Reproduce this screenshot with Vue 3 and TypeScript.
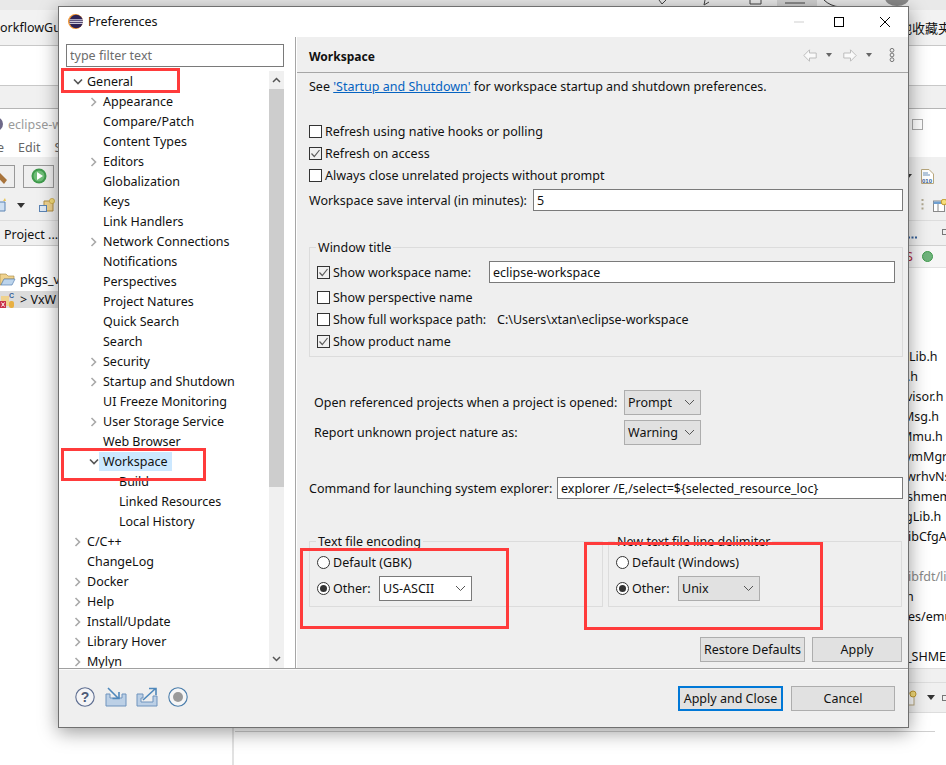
<script setup lang="ts">
interface TreeItem { label: string; level: number; arrow?: 'open' | 'closed'; selected?: boolean }
const tree: TreeItem[] = [
  { label: 'General', level: 0, arrow: 'open' },
  { label: 'Appearance', level: 1, arrow: 'closed' },
  { label: 'Compare/Patch', level: 1 },
  { label: 'Content Types', level: 1 },
  { label: 'Editors', level: 1, arrow: 'closed' },
  { label: 'Globalization', level: 1 },
  { label: 'Keys', level: 1 },
  { label: 'Link Handlers', level: 1 },
  { label: 'Network Connections', level: 1, arrow: 'closed' },
  { label: 'Notifications', level: 1 },
  { label: 'Perspectives', level: 1 },
  { label: 'Project Natures', level: 1 },
  { label: 'Quick Search', level: 1 },
  { label: 'Search', level: 1 },
  { label: 'Security', level: 1, arrow: 'closed' },
  { label: 'Startup and Shutdown', level: 1, arrow: 'closed' },
  { label: 'UI Freeze Monitoring', level: 1 },
  { label: 'User Storage Service', level: 1, arrow: 'closed' },
  { label: 'Web Browser', level: 1 },
  { label: 'Workspace', level: 1, arrow: 'open', selected: true },
  { label: 'Build', level: 2 },
  { label: 'Linked Resources', level: 2 },
  { label: 'Local History', level: 2 },
  { label: 'C/C++', level: 0, arrow: 'closed' },
  { label: 'ChangeLog', level: 0 },
  { label: 'Docker', level: 0, arrow: 'closed' },
  { label: 'Help', level: 0, arrow: 'closed' },
  { label: 'Install/Update', level: 0, arrow: 'closed' },
  { label: 'Library Hover', level: 0, arrow: 'closed' },
  { label: 'Mylyn', level: 0, arrow: 'closed' },
]
const refreshOptions = [
  { label: 'Refresh using native hooks or polling', on: false },
  { label: 'Refresh on access', on: true },
  { label: 'Always close unrelated projects without prompt', on: false },
]
const sideFiles = [
  { t: 'Lib.h', x: 9 }, { t: '.h', x: 7 }, { t: 'visor.h', x: 6 }, { t: 'Msg.h', x: 3 }, { t: 'Mmu.h', x: 1 },
  { t: 'vmMgr', x: 5 }, { t: 'wrhvNs', x: 6 }, { t: 'shmem', x: 7 }, { t: 'gLib.h', x: 5 }, { t: 'ibCfgA', x: 8 },
  { t: '', x: 0 }, { t: 'ibfdt/li', x: 8 }, { t: 'h', x: 6 }, { t: 'es/emu', x: 8 }, { t: '', x: 0 }, { t: '_SHME', x: 6 },
]
</script>

<template>
  <div class="desktop">
    <!-- browser window behind -->
    <div class="browser">
      <svg class="browser-top" width="946" height="10" viewBox="0 0 946 10">
        <rect width="946" height="10" fill="#e9e9e9"/>
        <rect x="777" width="40" height="10" fill="#d2d2d2"/>
        <path d="M659 0 L662 4 L666 0 M705 0 L704 5 L709 2 M750 0 V4 H761 V0 M771 0 M785 3 H805" fill="none" stroke="#444"/>
        <path d="M824 0 Q830 6 840 7" fill="none" stroke="#333"/>
        <ellipse cx="897" cy="-2" rx="12" ry="8" fill="#8a8a8a"/>
      </svg>
      <div class="browser-tabs">
        <span>orkflowGuid</span>
        <span class="cjk">地收藏夹</span>
      </div>
      <div class="browser-blank"></div>
      <div class="browser-bar"></div>
    </div>

    <!-- eclipse window behind -->
    <div class="eclipse">
      <div class="ec-title">
        <svg width="3" height="14" viewBox="0 0 3 14"><circle cx="-4" cy="7" r="7" fill="#6d6888"/></svg>
        <span class="ec-name">eclipse-w</span>
        <span class="spacer"></span>
        <span class="ec-restore"></span>
      </div>
      <div class="ec-menu"><span>e</span><span>Edit</span><span>S</span></div>
      <div class="ec-tool ec-tool1">
        <div class="ec-tool-left">
          <span class="ec-btn"><svg width="14" height="20" viewBox="0 0 14 20"><path d="M0 6 L3 3 L14 14 L11 18 Z" fill="#a8743c"/></svg></span>
          <span class="ec-btn"><svg width="16" height="16" viewBox="0 0 16 16"><circle cx="8" cy="8" r="7.5" fill="#3f9a4c"/><circle cx="8" cy="8" r="5.5" fill="#6fbe78"/><path d="M6 4 L12 8 L6 12 Z" fill="#fff"/></svg></span>
        </div>
        <div class="ec-tool-right">
          <span class="tri"></span>
          <svg width="13" height="15" viewBox="0 0 13 15"><path d="M0.5 0.5 H8 L12.5 5 V14.5 H0.5 Z" fill="#fff" stroke="#b7a67c"/><path d="M2 4 H7 M2 6 H9" stroke="#6f93bd"/><text x="1" y="13.5" font-size="6" font-weight="700" fill="#35609a" font-family="Liberation Sans">010</text></svg>
        </div>
      </div>
      <div class="ec-tool ec-tool2">
        <div class="ec-tool-left">
          <svg class="cut" width="14" height="14" viewBox="0 0 14 14"><path d="M1 4 H10 V13 H1 Z" fill="#cfe0f2" stroke="#5a83b3"/><path d="M8 3 L10 0 L11 3 Z" fill="#e8c65a"/></svg>
          <span class="tri"></span>
          <svg class="folder" width="16" height="14" viewBox="0 0 16 14"><path d="M5 3 H14 V13 H5 Z" fill="#efd28e" stroke="#b18f45"/><circle cx="13" cy="3" r="2.6" fill="#f5dd7a" stroke="#c19a30" stroke-width=".6"/><rect x="0.5" y="7.5" width="7" height="6" fill="#dfe9f5" stroke="#5a83b3"/></svg>
          <span class="tri"></span>
        </div>
        <div class="ec-tool-right">
          <svg width="3" height="14" viewBox="0 0 3 14"><path d="M1.5 1 V13" stroke="#b0a890" stroke-width="2" stroke-dasharray="2 2.2"/></svg>
          <svg width="18" height="13" viewBox="0 0 18 13"><rect x="0.5" y="2" width="11" height="10.5" fill="#fff" stroke="#8a8a8a"/><path d="M0.5 2.5 H11 V5 H0.5 Z" fill="#6f9fd0"/><path d="M5 5 V12" stroke="#8a8a8a"/><circle cx="11" cy="3" r="2.8" fill="#f5dd7a" stroke="#c19a30"/></svg>
        </div>
      </div>
      <div class="ec-tabs">
        <span>Project ...</span>
        <div class="ec-tabs-right">
          <svg width="9" height="3" viewBox="0 0 9 3"><path d="M0 1.5 H9" stroke="#35609a" stroke-width="2" stroke-dasharray="2 1.5"/></svg>
          <span class="mini-box"></span>
        </div>
      </div>
      <div class="ec-content">
        <div class="ec-tree">
          <div class="ec-row"><svg width="16" height="14" viewBox="0 0 16 14"><path d="M0 2 H6 L8 4 H14 V7 H4 L1 13 H0 Z" fill="#efd28e" stroke="#a3833c" stroke-width=".6"/><path d="M4 7 H15 L12 13 H1 Z" fill="#bcd4ec" stroke="#5a83b3" stroke-width=".7"/></svg><span class="pkgs">pkgs_v</span></div>
          <div class="ec-row ec-row-sel"><svg width="16" height="16" viewBox="0 0 16 16"><path d="M1 4 H9 V14 H1 Z" fill="#efd28e"/><text x="9" y="6" font-size="7" font-weight="700" fill="#35609a" font-family="Liberation Sans">C</text><rect x="0" y="9" width="6" height="7" fill="#c8324a"/><path d="M1.5 10.5 L4.5 14.5 M4.5 10.5 L1.5 14.5" stroke="#fff"/><rect x="9" y="9" width="5" height="7" rx="2" fill="#e8b043"/></svg><span class="vx">&gt; VxW</span></div>
        </div>
        <div class="ec-files">
          <div class="ec-band">
            <span class="s-red">S</span>
            <span class="dot"></span>
          </div>
          <div class="ec-list">
            <div v-for="(f, i) in sideFiles" :key="i" class="ec-file" :class="{ dim: f.t === 'ibfdt/li' }" :style="{ marginLeft: f.x + 'px' }">{{ f.t }}</div>
          </div>
        </div>
      </div>
      <div class="ec-band2"></div>
      <div class="ec-foot">
        <svg width="12" height="16" viewBox="0 0 12 16"><rect x="0" y="3" width="6" height="12" fill="#fff" stroke="#b7a67c"/><circle cx="5" cy="4" r="3" fill="#f5dd7a" stroke="#c19a30"/></svg>
        <span class="tri"></span>
        <span class="mini-box"></span>
      </div>
    </div>
    <div class="under-v"></div>
    <div class="under-h"></div>

    <!-- preferences dialog -->
    <div class="dialog">
      <div class="titlebar">
        <svg class="logo" width="15" height="15" viewBox="0 0 15 15">
          <circle cx="7.5" cy="7.5" r="7.5" fill="#f0922e"/>
          <circle cx="8.2" cy="7.5" r="6.8" fill="#2c2255"/>
          <path d="M1.5 5.8 H15 M1.5 7.6 H15 M1.5 9.4 H15" stroke="#f3f1f8" stroke-width="0.9"/>
        </svg>
        <span class="title">Preferences</span>
        <span class="spacer"></span>
        <svg class="wbtn wmin" width="10" height="10" viewBox="0 0 10 10"><path d="M0 5 H10" stroke="#cfcfcf"/></svg>
        <svg class="wbtn wmax" width="10" height="10" viewBox="0 0 10 10"><rect x="0.5" y="0.5" width="9" height="9" fill="none" stroke="#000"/></svg>
        <svg class="wbtn wclose" width="10" height="10" viewBox="0 0 10 10"><path d="M0 0 L10 10 M10 0 L0 10" stroke="#000"/></svg>
      </div>

      <div class="body">
        <div class="left">
          <input class="filter" placeholder="type filter text" />
          <div class="tree-wrap">
            <div class="tree">
              <div v-for="item in tree" :key="item.label" class="node" :class="'lv' + item.level">
                <span class="arrow">
                  <svg v-if="item.arrow === 'open'" width="10" height="8" viewBox="0 0 10 8"><path d="M1 1.5 L5 5.5 L9 1.5" fill="none" stroke="#555" stroke-width="1.6"/></svg>
                  <svg v-else-if="item.arrow === 'closed'" width="8" height="10" viewBox="0 0 8 10"><path d="M1.5 1 L5.5 5 L1.5 9" fill="none" stroke="#a9a9a9" stroke-width="1.6"/></svg>
                </span>
                <span class="node-label" :class="{ sel: item.selected }">{{ item.label }}</span>
              </div>
            </div>
            <div class="scroll">
              <div class="sc-btn"><svg width="9" height="6" viewBox="0 0 9 6"><path d="M1 5 L4.5 1.5 L8 5" fill="none" stroke="#555" stroke-width="1.5"/></svg></div>
              <div class="sc-thumb"></div>
              <div class="sc-rest"></div>
              <div class="sc-btn"><svg width="9" height="6" viewBox="0 0 9 6"><path d="M1 1 L4.5 4.5 L8 1" fill="none" stroke="#555" stroke-width="1.5"/></svg></div>
            </div>
          </div>
        </div>

        <div class="right">
          <div class="head">
            <span class="head-title">Workspace</span>
            <span class="spacer"></span>
            <svg class="nav-ico" width="14" height="13" viewBox="0 0 14 13"><path d="M6.5 0.8 L0.8 6.5 L6.5 12.2 V9 H13.2 V4 H6.5 Z" fill="#fafafa" stroke="#bdbdbd"/></svg>
            <span class="nav-tri first"></span>
            <svg class="nav-ico nav-fwd" width="14" height="13" viewBox="0 0 14 13"><path d="M7.5 0.8 L13.2 6.5 L7.5 12.2 V9 H0.8 V4 H7.5 Z" fill="#fafafa" stroke="#bdbdbd"/></svg>
            <span class="nav-tri"></span>
            <svg class="nav-ico nav-menu" width="6" height="14" viewBox="0 0 6 14"><g fill="none" stroke="#777"><circle cx="3" cy="2.3" r="1.9"/><circle cx="3" cy="7" r="1.9"/><circle cx="3" cy="11.7" r="1.9"/></g></svg>
          </div>

          <div class="content">
            <div class="see">See <a class="link">'Startup and Shutdown'</a> for workspace startup and shutdown preferences.</div>

            <div class="checks">
              <label v-for="o in refreshOptions" :key="o.label" class="check-row">
                <span class="check" :class="{ on: o.on }">
                  <svg v-if="o.on" width="11" height="11" viewBox="0 0 11 11"><path d="M1.5 5.5 L4.3 8.5 L9.5 2" fill="none" stroke="#5d5d5d" stroke-width="1.2"/></svg>
                </span>
                {{ o.label }}
              </label>
            </div>

            <div class="save-row">
              <span class="save-label">Workspace save interval (in minutes):</span>
              <input class="field grow" value="5" readonly />
            </div>

            <fieldset class="group win-group">
              <legend>Window title</legend>
              <div class="check-row name-row">
                <span class="check on"><svg width="11" height="11" viewBox="0 0 11 11"><path d="M1.5 5.5 L4.3 8.5 L9.5 2" fill="none" stroke="#5d5d5d" stroke-width="1.2"/></svg></span>
                <span class="name-label">Show workspace name:</span>
                <input class="field grow" value="eclipse-workspace" readonly />
              </div>
              <div class="check-row"><span class="check"></span>Show perspective name</div>
              <div class="check-row"><span class="check"></span><span class="full-label">Show full workspace path:</span><span>C:\Users\xtan\eclipse-workspace</span></div>
              <div class="check-row"><span class="check on"><svg width="11" height="11" viewBox="0 0 11 11"><path d="M1.5 5.5 L4.3 8.5 L9.5 2" fill="none" stroke="#5d5d5d" stroke-width="1.2"/></svg></span>Show product name</div>
            </fieldset>

            <div class="combo-grid">
              <span>Open referenced projects when a project is opened:</span>
              <div class="select gray">Prompt<svg width="11" height="7" viewBox="0 0 11 7"><path d="M1 1 L5.5 5.5 L10 1" fill="none" stroke="#555"/></svg></div>
              <span>Report unknown project nature as:</span>
              <div class="select gray">Warning<svg width="11" height="7" viewBox="0 0 11 7"><path d="M1 1 L5.5 5.5 L10 1" fill="none" stroke="#555"/></svg></div>
            </div>

            <div class="cmd-row">
              <span class="cmd-label">Command for launching system explorer:</span>
              <input class="field grow" value="explorer /E,/select=${selected_resource_loc}" readonly />
            </div>

            <div class="enc-row">
              <fieldset class="group enc">
                <legend>Text file encoding</legend>
                <div class="radio-row"><span class="radio"></span>Default (GBK)</div>
                <div class="radio-row other"><span class="radio on"></span><span class="other-label">Other:</span>
                  <div class="select white enc-sel">US-ASCII<svg width="11" height="7" viewBox="0 0 11 7"><path d="M1 1 L5.5 5.5 L10 1" fill="none" stroke="#555"/></svg></div>
                </div>
              </fieldset>
              <fieldset class="group enc">
                <legend>New text file line delimiter</legend>
                <div class="radio-row"><span class="radio"></span>Default (Windows)</div>
                <div class="radio-row other"><span class="radio on"></span><span class="other-label">Other:</span>
                  <div class="select gray delim-sel">Unix<svg width="11" height="7" viewBox="0 0 11 7"><path d="M1 1 L5.5 5.5 L10 1" fill="none" stroke="#555"/></svg></div>
                </div>
              </fieldset>
            </div>

            <div class="btn-row">
              <button class="btn restore">Restore Defaults</button>
              <button class="btn apply">Apply</button>
            </div>
          </div>
        </div>
      </div>

      <div class="footer">
        <svg width="20" height="20" viewBox="0 0 20 20"><circle cx="10" cy="10" r="9.2" fill="#f4f4f6" stroke="#5f6f92" stroke-width="1.1"/><text x="10" y="15" text-anchor="middle" font-size="14" font-weight="700" fill="#4f5b78" font-family="Liberation Sans">?</text></svg>
        <svg class="f2" width="22" height="20" viewBox="0 0 22 20"><path d="M1 7 H5 V11 H17 V7 H21 V19 H1 Z" fill="#bcd0e6" stroke="#6f93bd"/><path d="M3 1 L13 11 M14 5 V11.5 H7.5" fill="none" stroke="#4f88bb" stroke-width="1.6"/></svg>
        <svg class="f3" width="22" height="20" viewBox="0 0 22 20"><path d="M1 7 H7 V11 H5 V15 H17 V9 H21 V19 H1 Z" fill="#bcd0e6" stroke="#6f93bd"/><path d="M7 13 L19 2 M13 1.5 H20 V8" fill="none" stroke="#4f88bb" stroke-width="1.6"/></svg>
        <svg class="f4" width="20" height="20" viewBox="0 0 20 20"><circle cx="10" cy="10" r="9.2" fill="#f6f6f6" stroke="#4a7dab" stroke-width="1.1"/><circle cx="10" cy="10" r="5" fill="#9a9a9a"/></svg>
        <span class="spacer"></span>
        <button class="btn primary">Apply and Close</button>
        <button class="btn cancel">Cancel</button>
      </div>
    </div>

    <!-- red annotation rectangles drawn over the screenshot -->
    <div class="mark m1"></div>
    <div class="mark m2"></div>
    <div class="mark m3"></div>
    <div class="mark m4"></div>
  </div>
</template>

<style>
html, body { margin: 0; background: #fff; }
</style>

<style scoped>
.desktop {
  position: relative;
  width: 946px;
  height: 765px;
  overflow: hidden;
  background: #fff;
  font-family: "Noto Sans", "Noto Sans CJK SC", sans-serif;
  font-size: 12.5px;
  color: #111;
}
.spacer { flex: 1; }

/* background windows */
.browser { position: absolute; left: 0; top: 0; width: 946px; }
.browser-top { display: block; }
.browser-tabs {
  height: 36px; box-sizing: border-box; background: #f2f2f2; border-bottom: 1px solid #c8c8c8;
  display: flex; justify-content: space-between; align-items: center; padding-bottom: 1px; overflow: hidden; white-space: nowrap;
}
.cjk { margin-right: -5px; font-size: 13px; }
.browser-blank { height: 39px; background: #fff; }
.browser-bar { height: 23px; background: #f0f0f0; border-top: 1px solid #c8c8c8; }

.eclipse {
  position: absolute; left: 0; top: 108px; width: 946px; height: 606px;
  border-top: 1px solid #b5b5b5; background: #fff; box-sizing: border-box; overflow: hidden;
}
.ec-title { height: 30px; display: flex; align-items: center; padding: 0 23px 0 0; }
.ec-name { color: #9a9a9a; margin-left: 5px; white-space: nowrap; }
.ec-restore { width: 9px; height: 9px; border: 1px solid #aaa; }
.ec-menu { height: 18px; display: flex; gap: 14px; color: #666; margin-left: -3px; line-height: 18px; }
.ec-tool { background: #f0f0f0; display: flex; justify-content: space-between; align-items: center; }
.ec-tool1 { height: 38px; padding-right: 12px; }
.ec-tool2 { height: 26px; box-sizing: border-box; padding: 0 0 5px 0; margin-right: 0; border-bottom: 1px solid #ddd; }
.ec-tool-left { display: flex; align-items: center; gap: 8px; }
.ec-tool-right { display: flex; align-items: center; gap: 9px; margin-right: -5px; }
.ec-tool1 .ec-tool-right { margin-right: 0; }
.ec-btn { width: 31px; height: 23px; box-sizing: border-box; border: 1px solid #999; background: #efefef; display: flex; align-items: center; justify-content: center; margin-left: -16px; }
.ec-btn + .ec-btn { margin-left: 0; }
.cut { margin-left: -5px; }
.folder { margin-left: 6px; }
.tri { width: 0; height: 0; border: 4px solid transparent; border-top: 5px solid #333; border-bottom: 0; }
.ec-tabs {
  height: 25px; box-sizing: border-box; background: #f0f0f0; border-bottom: 1px solid #d0d0d0; padding: 0 0 0 4px; line-height: 28px;
  display: flex; justify-content: space-between; white-space: nowrap;
}
.ec-tabs-right { width: 38px; display: flex; justify-content: space-between; align-items: flex-start; padding-top: 8px; }
.ec-tabs-right svg { margin-top: 7px; }
.mini-box { width: 8px; height: 4px; border: 1px solid #777; margin-right: -6px; flex: none; }
.ec-content { display: flex; justify-content: space-between; height: 422px; }
.ec-tree { padding-top: 23px; }
.ec-row { height: 20px; display: flex; align-items: center; white-space: nowrap; }
.pkgs { margin-left: 4px; }
.vx { margin-left: 4px; }
.ec-row-sel { height: 17px; margin-top: 2px; background: #dcdcdc; }
.ec-files { width: 46px; overflow: hidden; }
.ec-band { height: 22px; background: #f6f6f6; border-bottom: 1px solid #e2e2e2; box-sizing: border-box; display: flex; align-items: center; padding-left: 6px; }
.s-red { color: #b0283c; width: 15px; }
.dot { width: 9px; height: 9px; border-radius: 50%; background: #6fb37c; border: 1px solid #3f9a4c; margin-left: 1px; }
.ec-list { padding-top: 79px; }
.ec-file { height: 20px; line-height: 20px; white-space: nowrap; }
.ec-file.dim { color: #888; }
.ec-band2 { height: 15px; width: 38px; margin-left: auto; box-sizing: border-box; background: #f0f0f0; border-top: 1px solid #ddd; border-bottom: 1px solid #ddd; }
.ec-foot { height: 30px; width: 38px; margin-left: auto; box-sizing: border-box; background: #f0f0f0; border-bottom: 1px solid #ddd; display: flex; justify-content: space-between; align-items: center; }
.under-v { position: absolute; left: 232px; top: 727px; width: 2px; height: 38px; background: #e2e2e2; }
.under-h { position: absolute; left: 235px; top: 731px; width: 700px; height: 1px; background: #cfcfcf; }

/* dialog */
.dialog {
  position: absolute; left: 58px; top: 6px; width: 851px; height: 722px; box-sizing: border-box;
  border: 1px solid #707070; background: #efefef;
  box-shadow: 0 4px 18px rgba(0, 0, 0, 0.4);
  display: flex; flex-direction: column;
}
.titlebar { height: 30px; box-sizing: border-box; background: #fff; display: flex; align-items: center; padding: 0 0 1px 9px; flex: none; }
.title { margin-left: 5px; color: #111; padding-bottom: 1px; }
.wbtn { flex: none; }
.wmax { margin-left: 30px; }
.wclose { margin-left: 36px; margin-right: 18px; }

.body { height: 631px; display: flex; flex: none; border-bottom: 1px solid #a0a0a0; box-sizing: content-box; }
.left { width: 236px; background: #fff; border-right: 1px solid #a6a6a6; flex: none; }
.filter {
  display: block; box-sizing: border-box; width: 218px; height: 23px; margin: 7px 0 0 7px;
  border: 1px solid #7a7a7a; padding: 0 3px; font: inherit; outline: none; color: #111; background: #fff;
}
.filter::placeholder { color: #6d6d6d; opacity: 1; }
.tree-wrap { margin-top: 4px; height: 597px; display: flex; overflow: hidden; }
.tree { width: 210px; flex: none; height: 597px; overflow: hidden; }
.node { height: 20px; display: flex; align-items: center; white-space: nowrap; padding-top: 1px; box-sizing: border-box; }
.arrow { width: 17px; height: 20px; flex: none; display: flex; align-items: center; justify-content: center; padding-right: 1px; box-sizing: border-box; }
.lv0 { padding-left: 11px; }
.lv1 { padding-left: 27px; }
.lv2 { padding-left: 43px; }
.node-label { line-height: 19px; padding: 0 3px 0 0; }
.node-label.sel { background: #cce8ff; padding: 0 4px; margin-left: -4px; }
.scroll { width: 15px; background: #f0f0f0; display: flex; flex-direction: column; flex: none; }
.sc-btn { height: 18px; display: flex; align-items: center; justify-content: center; flex: none; }
.sc-thumb { height: 398px; background: #cdcdcd; flex: none; }
.sc-rest { flex: 1; }

.right { flex: 1; border-left: 1px solid #fff; min-width: 0; }
.head { height: 36px; box-sizing: border-box; border-bottom: 1px solid #a6a6a6; display: flex; align-items: center; padding: 0 13px 0 12px; }
.head-title { font-weight: 700; font-size: 12px; padding-top: 3px; }
.nav-ico { margin-top: 1px; }
.nav-tri { width: 0; height: 0; border: 3.5px solid transparent; border-top: 4px solid #666; border-bottom: 0; margin-left: 9px; margin-top: 1px; }
.nav-fwd { margin-left: 11px; }
.nav-menu { margin-left: 17px; }

.content { padding: 0 5px 0 12px; }
.see { height: 28px; line-height: 28px; white-space: nowrap; }
.link { color: #0563c1; text-decoration: underline; }
.checks { margin-top: 19px; }
.check-row { height: 22px; display: flex; align-items: center; white-space: nowrap; }
.check {
  width: 13px; height: 13px; box-sizing: border-box; border: 1px solid #333; background: #fff; margin-right: 3px; flex: none;
  display: flex; align-items: center; justify-content: center;
}
.check.on { background: #f0f0f0; }
.field {
  box-sizing: border-box; height: 22px; border: 1px solid #7a7a7a; background: #fff; padding: 0 3px; font: inherit; color: #111; outline: none; min-width: 0;
}
.grow { flex: 1; }
.save-row { margin-top: 3px; display: flex; align-items: center; }
.save-label { width: 224px; flex: none; white-space: nowrap; }

.group { position: relative; margin: 0; padding: 0; border: 1px solid #dcdcdc; box-sizing: border-box; min-width: 0; }
.group legend { position: absolute; top: -9px; left: 6px; padding: 0 2px; background: #efefef; line-height: 17px; white-space: nowrap; }
.win-group { margin-top: 36px; height: 110px; padding: 13px 7px 0 7px; }
.name-row { margin-bottom: 3px; }
.name-label { width: 156px; flex: none; }
.full-label { width: 164px; flex: none; }

.combo-grid { margin-top: 33px; display: grid; grid-template-columns: 310px 77px; row-gap: 5px; padding-left: 5px; align-items: center; white-space: nowrap; }
.select {
  box-sizing: border-box; height: 25px; display: flex; align-items: center; justify-content: space-between; padding: 0 5px 0 3px; border: 1px solid #adadad; white-space: nowrap;
}
.select.gray { background: #e1e1e1; }
.select.white { background: #fff; border-color: #7a7a7a; }
.cmd-row { margin-top: 32px; display: flex; align-items: center; }
.cmd-label { width: 248px; flex: none; white-space: nowrap; }

.enc-row { margin-top: 42px; display: flex; gap: 5px; }
.enc { width: 294px; height: 66px; padding: 9px 0 0 7px; }
.radio-row { height: 22px; display: flex; align-items: center; white-space: nowrap; }
.other { height: 30px; }
.other-label { width: 46px; flex: none; }
.radio {
  position: relative; width: 13px; height: 13px; box-sizing: border-box; border: 1px solid #333; border-radius: 50%; background: #fff; margin-right: 3px; flex: none;
}
.radio.on::after { content: ""; position: absolute; left: 2px; top: 2px; width: 7px; height: 7px; border-radius: 50%; background: #333; }
.enc-sel { width: 93px; }
.delim-sel { width: 82px; }

.btn-row { margin-top: 30px; padding-right: 1px; display: flex; justify-content: flex-end; gap: 7px; }
.btn {
  box-sizing: border-box; height: 25px; background: #e1e1e1; border: 1px solid #adadad; font: inherit; color: #111; padding: 0; margin: 0; white-space: nowrap;
}
.restore { width: 105px; }
.apply { width: 90px; }
.footer { flex: 1; display: flex; align-items: center; padding: 0 13px 1px 16px; border-top: 1px solid #fbfbfb; }
.footer svg { margin-bottom: 2px; }
.f2 { margin-left: 10px; }
.f3 { margin-left: 9px; }
.f4 { margin-left: 10px; }
.primary { width: 105px; border: 2px solid #0078d7; }
.cancel { width: 104px; margin-left: 8px; }

/* annotations */
.mark { position: absolute; border: 3px solid #ff3b3b; box-sizing: border-box; }
.m1 { left: 61px; top: 68px; width: 119px; height: 25px; }
.m2 { left: 61px; top: 448px; width: 145px; height: 33px; }
.m3 { left: 300px; top: 548px; width: 209px; height: 81px; }
.m4 { left: 584px; top: 542px; width: 239px; height: 88px; }
</style>
